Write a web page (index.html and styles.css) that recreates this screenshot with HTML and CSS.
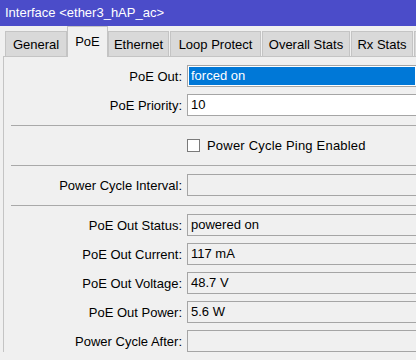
FILE: index.html
```html
<!DOCTYPE html>
<html>
<head>
<meta charset="utf-8">
<link rel="stylesheet" href="styles.css">
</head>
<body>
<div class="window">
  <div class="titlebar">Interface &lt;ether3_hAP_ac&gt;</div>
  <div class="tabs">
    <div class="tab w-general">General</div>
    <div class="tab selected w-poe">PoE</div>
    <div class="tab w-ethernet">Ethernet</div>
    <div class="tab w-loop">Loop Protect</div>
    <div class="tab w-overall">Overall Stats</div>
    <div class="tab w-rx">Rx Stats</div>
    <div class="tab w-more"></div>
  </div>
  <div class="panel">
    <div class="row">
      <div class="label">PoE Out:</div>
      <div class="field select">forced on</div>
    </div>
    <div class="row">
      <div class="label">PoE Priority:</div>
      <div class="field edit">10</div>
    </div>
    <div class="sep"></div>
    <div class="row">
      <div class="label"></div>
      <div class="check-wrap"><span class="checkbox"></span><span class="check-label">Power Cycle Ping Enabled</span></div>
    </div>
    <div class="sep"></div>
    <div class="row">
      <div class="label">Power Cycle Interval:</div>
      <div class="field"></div>
    </div>
    <div class="sep"></div>
    <div class="row">
      <div class="label">PoE Out Status:</div>
      <div class="field">powered on</div>
    </div>
    <div class="row">
      <div class="label">PoE Out Current:</div>
      <div class="field">117 mA</div>
    </div>
    <div class="row">
      <div class="label">PoE Out Voltage:</div>
      <div class="field">48.7 V</div>
    </div>
    <div class="row">
      <div class="label">PoE Out Power:</div>
      <div class="field">5.6 W</div>
    </div>
    <div class="row">
      <div class="label">Power Cycle After:</div>
      <div class="field"></div>
    </div>
  </div>
</div>
</body>
</html>
```
FILE: styles.css
```css
html, body {
  margin: 0;
  padding: 0;
  background: #f0f0f0;
  overflow: hidden;
}
body {
  width: 416px;
  height: 360px;
  font-family: "Liberation Sans", Arial, sans-serif;
  font-size: 13px;
  color: #000;
}
.window {
  width: 416px;
  overflow: hidden;
}
.titlebar {
  height: 26px;
  line-height: 26px;
  background: #4b4cc9;
  color: #fff;
  padding-left: 5px;
}
.tabs {
  display: flex;
  align-items: flex-end;
  height: 30px;
  padding-left: 5px;
}
.tab {
  box-sizing: border-box;
  flex: none;
  height: 25px;
  display: flex;
  align-items: center;
  justify-content: center;
  background: #d9d9d9;
  border: 1px solid #c4c4c4;
  border-bottom: none;
  margin-right: 1px;
  white-space: nowrap;
}
.w-general { width: 62px; }
.w-poe { width: 41px; margin-left: -1px; }
.w-ethernet { width: 61px; margin-left: -1px; }
.w-loop { width: 91px; }
.w-overall { width: 88px; }
.w-rx { width: 62px; }
.w-more { width: 40px; }
.tab.selected {
  height: 31px;
  margin-bottom: -1px;
  padding-bottom: 2px;
  background: #f0f0f0;
  position: relative;
  z-index: 1;
}
.panel {
  margin-left: 3px;
  border-top: 1px solid #c4c4c4;
  border-left: 1px solid #c4c4c4;
  padding-top: 8px;
  display: flex;
  flex-direction: column;
  gap: 7px;
}
.row {
  display: grid;
  grid-template-columns: 178px 1fr;
  column-gap: 5px;
  height: 22px;
  align-items: center;
}
.label {
  text-align: right;
  white-space: nowrap;
}
.field {
  height: 20px;
  line-height: 20px;
  border: 1px solid #a5a5a5;
  border-right: none;
  padding-left: 3px;
  background: #f0f0f0;
}
.field.edit {
  background: #fff;
}
.field.select {
  background: #0078d7;
  color: #fff;
  box-shadow: inset 0 0 0 1px #fff;
}
.sep {
  height: 1px;
  background: #a9a9a9;
  margin: 2px 0 1px 7px;
}
.check-wrap {
  display: flex;
  align-items: center;
  gap: 7px;
}
.checkbox {
  width: 11px;
  height: 11px;
  border: 1px solid #7a7a7a;
  background: #fff;
}
.check-label {
  letter-spacing: 0.2px;
}
```
